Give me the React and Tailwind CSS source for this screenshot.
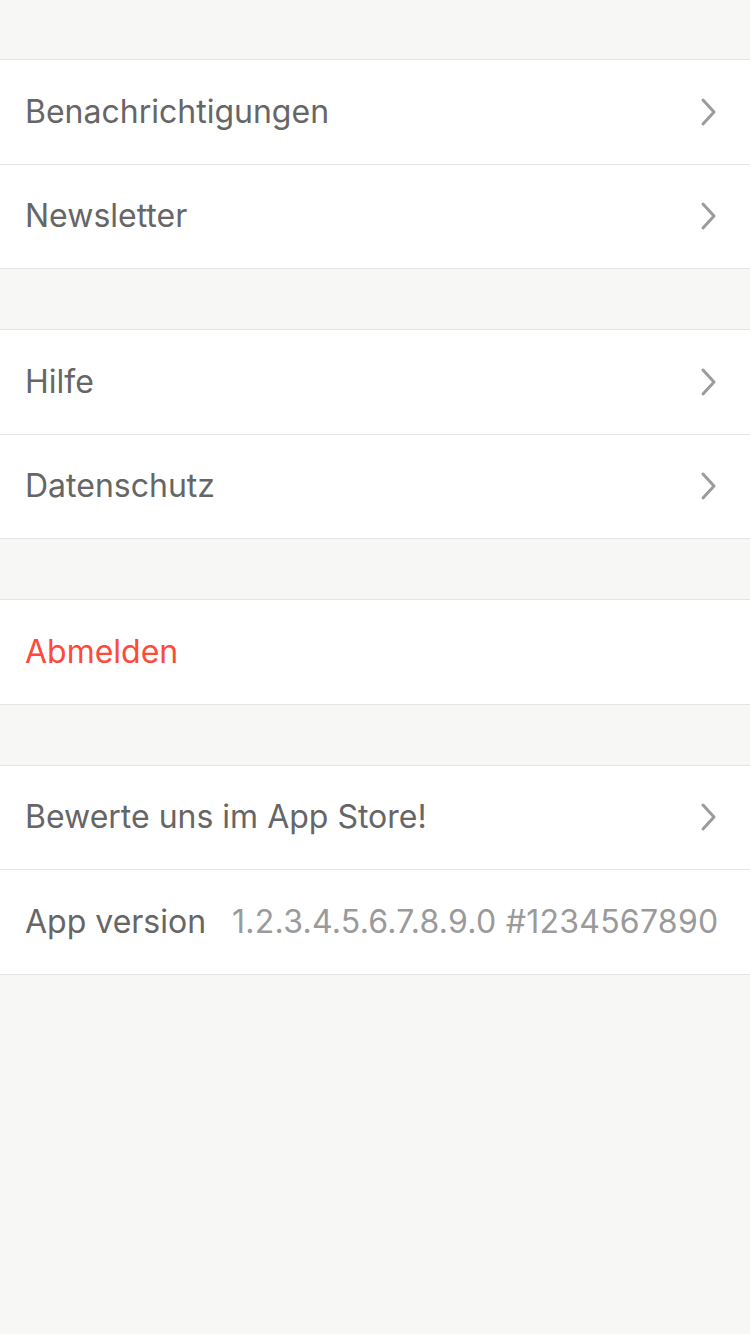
import React from 'react';

function Chevron() {
  return (
    <svg width="18" height="30" viewBox="0 0 18 30" className="shrink-0">
      <path d="M4 3 L15 15 L4 27" fill="none" stroke="#9b9b9b" strokeWidth="3" strokeLinecap="round" strokeLinejoin="round" />
    </svg>
  );
}

function Row({ label, red, chevron = true, value }) {
  return (
    <div className="flex items-center h-[104.5px] bg-white border-b border-[#e4e4e4] pl-[25px] pr-[33px] whitespace-nowrap">
      <span className={red ? "shrink-0 text-[#ff4a3a]" : "shrink-0 text-[#666666]"}>{label}</span>
      {value && <span className="shrink-0 ml-[26px] text-[#9a9a9a] tracking-[0.25px]">{value}</span>}
      <div className="flex-1" />
      {chevron && <Chevron />}
    </div>
  );
}

function Group({ children, first }) {
  return (
    <div className={`border-t border-[#e4e4e4] ${first ? 'mt-[59px]' : 'mt-[60px]'}`}>
      {children}
    </div>
  );
}

export default function App() {
  return (
    <div className="flex flex-col min-h-[1334px] bg-[#f7f7f5] text-[32px] font-['Inter',sans-serif]">
      <Group first>
        <Row label="Benachrichtigungen" />
        <Row label="Newsletter" />
      </Group>
      <Group>
        <Row label="Hilfe" />
        <Row label="Datenschutz" />
      </Group>
      <Group>
        <Row label="Abmelden" red chevron={false} />
      </Group>
      <Group>
        <Row label="Bewerte uns im App Store!" />
        <Row label="App version" value="1.2.3.4.5.6.7.8.9.0 #1234567890" chevron={false} />
      </Group>
    </div>
  );
}
